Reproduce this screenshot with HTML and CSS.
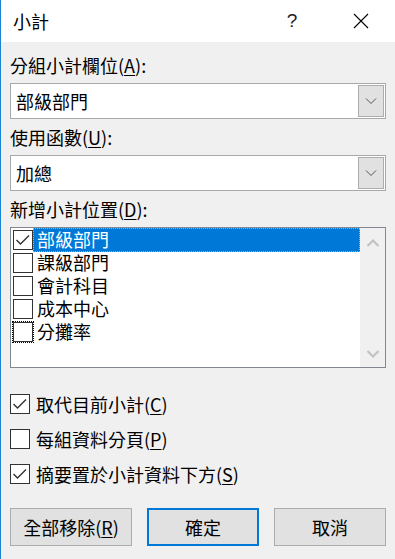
FILE: index.html
```html
<!DOCTYPE html>
<html lang="zh-Hant">

<head>
    <meta charset="UTF-8">
    <meta name="viewport" content="width=device-width, initial-scale=1.0">
    <title>小計</title>
    <link rel="stylesheet" href="styles.css">
</head>

<body>
    <div class="dialog">
        <div class="titlebar">
            <span class="title">小計</span>
            <span class="help">?</span>
            <span class="close">
                <svg width="16" height="16" viewBox="0 0 16 16">
                    <path d="M1 1L15 15M15 1L1 15" stroke="#000" stroke-width="1.1" fill="none"/>
                </svg>
            </span>
        </div>

        <div class="content">
            <div class="label">分組小計欄位(<u>A</u>):</div>
            <div class="combo">
                <span class="combo-text">部級部門</span>
                <span class="combo-btn">
                    <svg width="12" height="8" viewBox="0 0 12 8">
                        <path d="M1 1.5L6 6.5L11 1.5" stroke="#555" stroke-width="1" fill="none"/>
                    </svg>
                </span>
            </div>

            <div class="label">使用函數(<u>U</u>):</div>
            <div class="combo">
                <span class="combo-text">加總</span>
                <span class="combo-btn">
                    <svg width="12" height="8" viewBox="0 0 12 8">
                        <path d="M1 1.5L6 6.5L11 1.5" stroke="#555" stroke-width="1" fill="none"/>
                    </svg>
                </span>
            </div>

            <div class="label">新增小計位置(<u>D</u>):</div>
            <div class="listbox">
                <ul class="items">
                    <li class="item selected">
                        <span class="box">
                            <svg width="18" height="18" viewBox="0 0 18 18">
                                <path d="M2.5 9L6.5 13L15 4.5" stroke="#333" stroke-width="1.4" fill="none"/>
                            </svg>
                        </span>
                        <span class="item-text">部級部門</span>
                    </li>
                    <li class="item">
                        <span class="box"></span>
                        <span class="item-text">課級部門</span>
                    </li>
                    <li class="item">
                        <span class="box"></span>
                        <span class="item-text">會計科目</span>
                    </li>
                    <li class="item">
                        <span class="box"></span>
                        <span class="item-text">成本中心</span>
                    </li>
                    <li class="item">
                        <span class="box focus"></span>
                        <span class="item-text">分攤率</span>
                    </li>
                </ul>
                <div class="scrollbar">
                    <svg width="14" height="10" viewBox="0 0 14 10">
                        <path d="M1.5 8L7 2.5L12.5 8" stroke="#c2c2c2" stroke-width="2.2" fill="none"/>
                    </svg>
                    <svg width="14" height="10" viewBox="0 0 14 10">
                        <path d="M1.5 2L7 7.5L12.5 2" stroke="#c2c2c2" stroke-width="2.2" fill="none"/>
                    </svg>
                </div>
            </div>

            <div class="options">
                <div class="option">
                    <span class="box">
                        <svg width="18" height="18" viewBox="0 0 18 18">
                            <path d="M2.5 9L6.5 13L15 4.5" stroke="#333" stroke-width="1.4" fill="none"/>
                        </svg>
                    </span>
                    <span>取代目前小計(<u>C</u>)</span>
                </div>
                <div class="option">
                    <span class="box"></span>
                    <span>每組資料分頁(<u>P</u>)</span>
                </div>
                <div class="option">
                    <span class="box">
                        <svg width="18" height="18" viewBox="0 0 18 18">
                            <path d="M2.5 9L6.5 13L15 4.5" stroke="#333" stroke-width="1.4" fill="none"/>
                        </svg>
                    </span>
                    <span>摘要置於小計資料下方(<u>S</u>)</span>
                </div>
            </div>

            <div class="buttons">
                <button class="btn btn-wide">全部移除(<u>R</u>)</button>
                <button class="btn btn-default">確定</button>
                <button class="btn">取消</button>
            </div>
        </div>
    </div>
</body>

</html>
```

FILE: styles.css
```css
* {
    box-sizing: border-box;
}

body {
    margin: 0;
    font-family: "Noto Sans CJK TC", "Noto Sans", sans-serif;
    font-size: 18px;
    line-height: 24px;
    color: #000;
}

u {
    text-underline-offset: 2px;
    text-decoration-thickness: 1px;
}

.dialog {
    width: 395px;
    height: 559px;
    border-left: 1px solid #1883d7;
    background-color: #f0f0f0;
    display: flex;
    flex-direction: column;
}

/* title bar */
.titlebar {
    height: 42px;
    background-color: #fff;
    display: flex;
    align-items: center;
    padding-left: 12px;
}

.title {
    flex: 1;
}

.help {
    width: 70px;
    text-align: center;
    font-family: "Liberation Sans", sans-serif;
    font-size: 19px;
    color: #222;
}

.close {
    width: 68px;
    display: flex;
    justify-content: center;
    align-items: center;
}

/* body */
.content {
    padding: 11px 9px 0 9px;
}

.label {
    height: 24px;
    margin-bottom: 6px;
}

.combo {
    height: 36px;
    margin-bottom: 6px;
    background-color: #fff;
    border: 1px solid #a9a9a9;
    padding: 1px;
    display: flex;
    align-items: center;
}

.combo-text {
    flex: 1;
    padding-left: 4px;
}

.combo-btn {
    width: 26px;
    height: 32px;
    background-color: #e1e1e1;
    border: 1px solid #adadad;
    display: flex;
    justify-content: center;
    align-items: center;
}

/* list */
.listbox {
    height: 141px;
    border: 1px solid #828790;
    background-color: #fff;
    display: flex;
}

.items {
    flex: 1;
    margin: 0;
    padding: 0;
    list-style: none;
}

.item {
    height: 23px;
    display: flex;
    align-items: center;
    padding-left: 2px;
}

.item .box {
    width: 20px;
    height: 20px;
}

.item-text {
    flex: 1;
    height: 23px;
    padding-left: 4px;
    line-height: 22px;
}

.selected .item-text {
    background-color: #0078d7;
    color: #fff;
    outline: 1px dotted #e8a54a;
    outline-offset: -1px;
    height: 24px;
    margin-top: 1px;
}

.box {
    width: 20px;
    height: 20px;
    border: 1px solid #333;
    background-color: #fff;
    display: flex;
    justify-content: center;
    align-items: center;
    flex-shrink: 0;
}

.box.focus {
    outline: 1px dotted #000;
    outline-offset: 0;
}

.scrollbar {
    width: 25px;
    background-color: #f0f0f0;
    display: flex;
    flex-direction: column;
    justify-content: space-between;
    align-items: center;
    padding: 10px 0 8px 0;
}

/* options */
.options {
    margin-top: 18px;
}

.option {
    height: 35px;
    display: flex;
    align-items: center;
    gap: 6px;
}

/* buttons */
.buttons {
    margin-top: 17px;
    display: flex;
    gap: 15px;
}

.btn {
    width: 112px;
    height: 38px;
    font-family: inherit;
    font-size: 18px;
    color: #000;
    background-color: #e1e1e1;
    border: 1px solid #adadad;
    padding: 0;
}

.btn-wide {
    width: 122px;
}

.btn-default {
    border: 2px solid #0078d7;
}
```
